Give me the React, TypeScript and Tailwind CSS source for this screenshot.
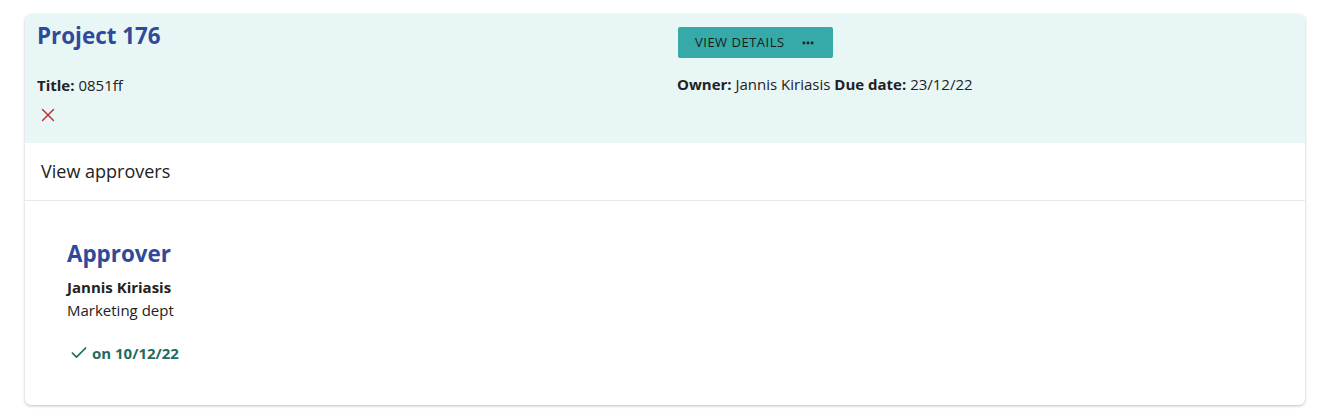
import { X, Check, MoreHorizontal } from 'lucide-react';

export default function App() {
    return (
        <div className="min-h-screen bg-white pl-[25px] pr-[33px] pt-[14px] font-['Open_Sans',sans-serif] text-[#222]">
            <div className="overflow-hidden rounded-md bg-white shadow-[0_1px_3px_rgba(0,0,0,0.25)]">
                <div className="flex h-[129px] bg-[#e9f6f6] px-3 pt-[6px]">
                    <div className="w-[640px]">
                        <h1 className="text-[22.4px] font-bold leading-[32px] text-[#2f4a9a]">Project 176</h1>
                        <p className="mt-[22px] text-[15px] leading-[22px]">
                            <span className="font-bold">Title:</span> 0851ff
                        </p>
                        <X className="mt-[8px] h-[22px] w-[22px] text-[#c0313b]" strokeWidth={1.6} />
                    </div>
                    <div>
                        <button className="ml-[1px] mt-[7px] flex h-[31px] w-[155px] items-center rounded-[2px] bg-[#35aaa8] pl-[17px] text-[13px] uppercase tracking-[0.5px] text-[#1c1c1c]">
                            View details
                            <MoreHorizontal className="ml-[16px] h-[14px] w-[14px]" strokeWidth={3} />
                        </button>
                        <p className="mt-[15px] text-[15px] leading-[22px]">
                            <span className="font-bold">Owner:</span> Jannis Kiriasis{' '}
                            <span className="font-bold">Due date:</span> 23/12/22
                        </p>
                    </div>
                </div>
                <div className="flex h-[58px] items-center border-b border-[#e8e8ee] px-4 text-[18px]">
                    View approvers
                </div>
                <div className="h-[204px] px-[42px] pt-[38px]">
                    <h2 className="text-[22.4px] font-bold leading-[30px] text-[#2f4a9a]">Approver</h2>
                    <p className="mt-[7px] text-[15px] font-bold leading-[23px]">Jannis Kiriasis</p>
                    <p className="text-[15px] leading-[23px]">Marketing dept</p>
                    <div className="ml-[2px] mt-[20px] flex items-center gap-[3px] text-[15px] font-bold text-[#1f6b62]">
                        <Check className="h-[20px] w-[20px]" strokeWidth={2} />
                        on 10/12/22
                    </div>
                </div>
            </div>
        </div>
    );
}
